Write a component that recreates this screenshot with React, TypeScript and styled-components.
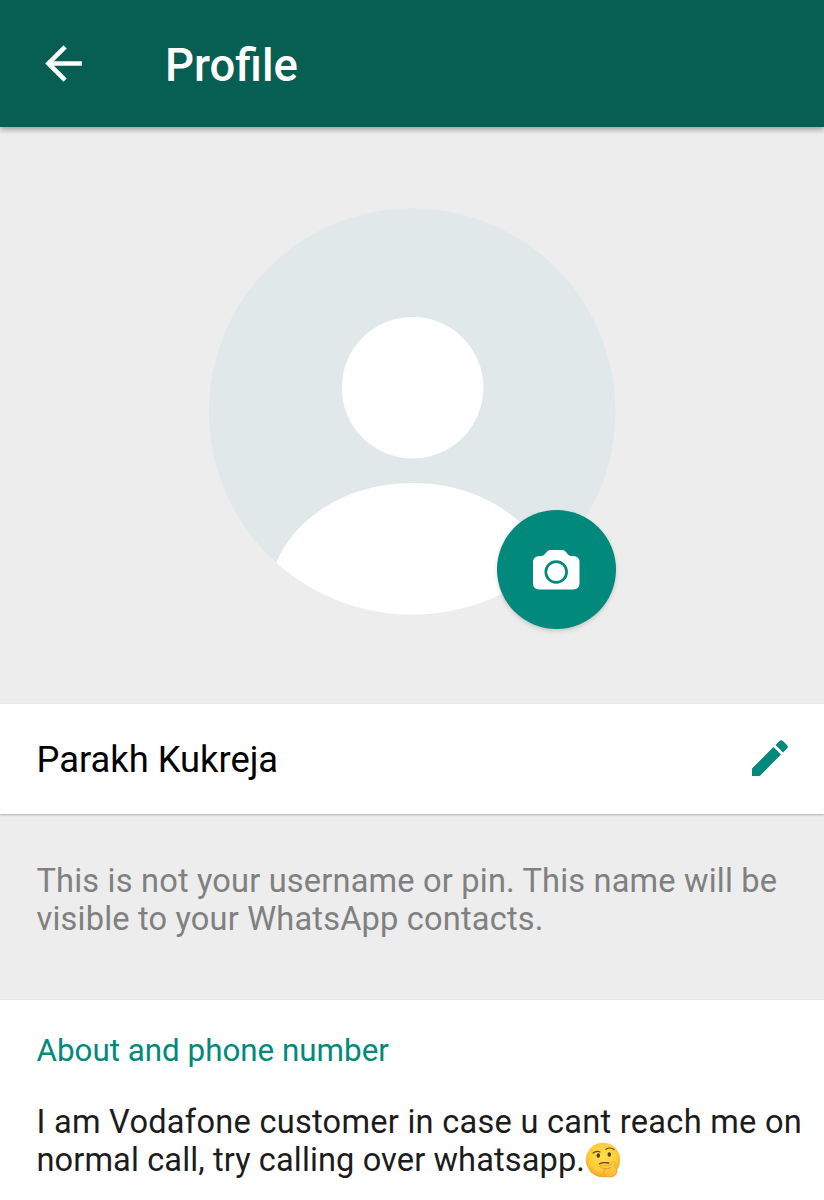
import React from 'react';
import styled, { createGlobalStyle } from 'styled-components';

const GlobalStyle = createGlobalStyle`
  * { box-sizing: border-box; }
  html, body { margin: 0; padding: 0; background: #fff; }
  body { font-family: Roboto, "Liberation Sans", sans-serif; overflow: hidden; }
  h1, h2, p { margin: 0; font-weight: 400; }
  button { border: 0; padding: 0; background: none; color: inherit; display: block; }
  svg { display: block; }
`;

const Screen = styled.div`
  width: 824px;
  height: 1200px;
  display: flex;
  flex-direction: column;
  background: #fff;
  overflow: hidden;
`;

const Toolbar = styled.header`
  flex: none;
  height: 127px;
  padding-left: 36px;
  display: flex;
  align-items: center;
  gap: 74px;
  background: #075e52;
  color: #fff;
  box-shadow: 0 2px 6px rgba(0, 0, 0, 0.4);
  z-index: 1;
`;

const Title = styled.h1`
  padding-top: 4px;
  font-size: 45.5px;
  line-height: 54px;
  font-weight: 500;
`;

const Hero = styled.section`
  flex: none;
  height: 577px;
  padding-top: 81px;
  display: flex;
  justify-content: center;
  background: #ededed;
`;

const Avatar = styled.div`
  position: relative;
  width: 407px;
  height: 407px;
`;

const CameraButton = styled.button`
  position: absolute;
  right: 0;
  bottom: -14px;
  width: 119px;
  height: 119px;
  border-radius: 50%;
  display: flex;
  align-items: center;
  justify-content: center;
  background: #01897b;
  box-shadow: 0 2px 4px rgba(0, 0, 0, 0.16);
`;

const NameRow = styled.section`
  flex: none;
  height: 110px;
  padding: 0 30px 2px 36.5px;
  display: flex;
  align-items: center;
  justify-content: space-between;
  background: #fff;
  color: #000;
  box-shadow: 0 1px 2px rgba(0, 0, 0, 0.26);
  z-index: 1;
`;

const Name = styled.h2`
  padding-top: 4px;
  font-size: 36.3px;
  line-height: 44px;
`;

const Hint = styled.section`
  flex: none;
  height: 186px;
  padding: 48px 36.5px 0;
  background: #ededed;
  color: #808080;
  border-bottom: 1px solid #e6e6e6;
`;

const About = styled.section`
  padding: 32px 0 0 36.5px;
`;

const Text = styled.p<{ $size?: number; $tracking?: number }>`
  font-size: ${({ $size = 32.6 }) => $size}px;
  letter-spacing: ${({ $tracking = 0 }) => $tracking}px;
  line-height: 38px;
  white-space: nowrap;
`;

const SectionLabel = styled(Text)`
  margin-bottom: 33px;
  color: #01897b;
`;

const StatusLine = styled(Text)`
  display: flex;
  align-items: center;
  color: #1c1c1c;
`;

const BackIcon = () => (
  <svg width="55" height="55" viewBox="0 0 24 24" fill="currentColor">
    <path d="M20 11H7.83l5.59-5.59L12 4l-8 8 8 8 1.41-1.41L7.83 13H20v-2z" />
  </svg>
);

const PersonIcon = () => (
  <svg width="407" height="407" viewBox="0 0 407 407">
    <defs>
      <clipPath id="disc">
        <circle cx="203.2" cy="203.5" r="203.2" />
      </clipPath>
    </defs>
    <circle cx="203.2" cy="203.5" r="203.2" fill="#e0e8ea" />
    <g fill="#fff" clipPath="url(#disc)">
      <circle cx="203.6" cy="179.7" r="70.8" />
      <path d="M67 355C83.5 314 133.5 275 203.5 275S323.5 314 340 355V407H67Z" />
    </g>
  </svg>
);

const CameraIcon = () => (
  <svg width="47" height="40" viewBox="0 0 47 40">
    <path
      fill="#fff"
      d="M17.500 0H29Q31.500 0 33.200 2.200L35 4.600Q36.200 6 38 6H40Q46.500 6 46.500 12.500V33Q46.500 39.500 40 39.500H6.500Q0 39.500 0 33V12.500Q0 6 6.500 6H8.500Q10.300 6 11.500 4.600L13.300 2.200Q15 0 17.500 0Z"
    />
    <circle cx="23.200" cy="22" r="10.400" fill="none" stroke="#01897b" strokeWidth="2.700" />
  </svg>
);

const PencilIcon = () => (
  <svg width="48" height="48" viewBox="0 0 24 24" fill="#01897b">
    <path d="M3 17.250V21h3.900L17.500 10.250 13.700 6.450 3 17.250zM20.600 7.150c.45-.45.45-1.070 0-1.500l-2.240-2.240c-.43-.43-1.050-.43-1.500 0l-2.060 2.040 3.770 3.750 2.030-2.050z" />
  </svg>
);

const ThinkingFace = () => (
  <svg width="36" height="36" viewBox="0 0 36 36" role="img" aria-label="thinking face">
    <defs>
      <radialGradient id="face" cx="0.5" cy="0.4" r="0.62">
        <stop offset="0" stopColor="#ffe04a" />
        <stop offset="0.65" stopColor="#fdcc38" />
        <stop offset="1" stopColor="#f0a126" />
      </radialGradient>
      <linearGradient id="hand" x1="0" y1="0" x2="0" y2="1">
        <stop offset="0" stopColor="#ffd34b" />
        <stop offset="1" stopColor="#f9b833" />
      </linearGradient>
    </defs>
    <circle cx="18" cy="18" r="17.200" fill="url(#face)" />
    <g fill="none" stroke="#664021" strokeLinecap="round">
      <path d="M8 11Q11.500 8.300 15 10" strokeWidth="1.200" />
      <path d="M21 7.300Q25 4.600 29 7.500" strokeWidth="1.200" />
      <path d="M14.500 21.800Q18 20 23.500 21" strokeWidth="1.400" />
    </g>
    <ellipse cx="13.300" cy="13.500" rx="1.700" ry="2.200" fill="#563820" />
    <ellipse cx="24.300" cy="12.500" rx="1.700" ry="2.200" fill="#563820" />
    <path
      d="M15.500 23.300Q20 24.300 26 22.500Q27.500 19.500 29.300 19.500Q31 20 30 22.800L29.500 25Q32.800 27 32 30Q31 34.500 26 35Q20 35.300 19 31.500Q18.300 28.500 19.500 26.800L15.800 25.800Q14.300 24.300 15.500 23.300Z"
      fill="url(#hand)"
      stroke="#e89a2a"
      strokeWidth="0.700"
    />
    <path d="M19.500 26.800Q22.500 27.300 25.500 25.500" fill="none" stroke="#df8825" strokeWidth="0.800" />
  </svg>
);

export default function App() {
  return (
    <>
      <GlobalStyle />
      <Screen>
        <Toolbar>
          <button aria-label="Back">
            <BackIcon />
          </button>
          <Title>Profile</Title>
        </Toolbar>
        <Hero>
          <Avatar>
            <PersonIcon />
            <CameraButton aria-label="Change photo">
              <CameraIcon />
            </CameraButton>
          </Avatar>
        </Hero>
        <NameRow>
          <Name>Parakh Kukreja</Name>
          <button aria-label="Edit name">
            <PencilIcon />
          </button>
        </NameRow>
        <Hint>
          <Text $tracking={0.18}>
            This is not your username or pin. This name will be
            <br />
            visible to your WhatsApp contacts.
          </Text>
        </Hint>
        <About>
          <SectionLabel $size={31.35}>About and phone number</SectionLabel>
          <StatusLine $tracking={0.26}>I am Vodafone customer in case u cant reach me on</StatusLine>
          <StatusLine $tracking={0.11}>
            normal call, try calling over whatsapp.
            <ThinkingFace />
          </StatusLine>
        </About>
      </Screen>
    </>
  );
}
